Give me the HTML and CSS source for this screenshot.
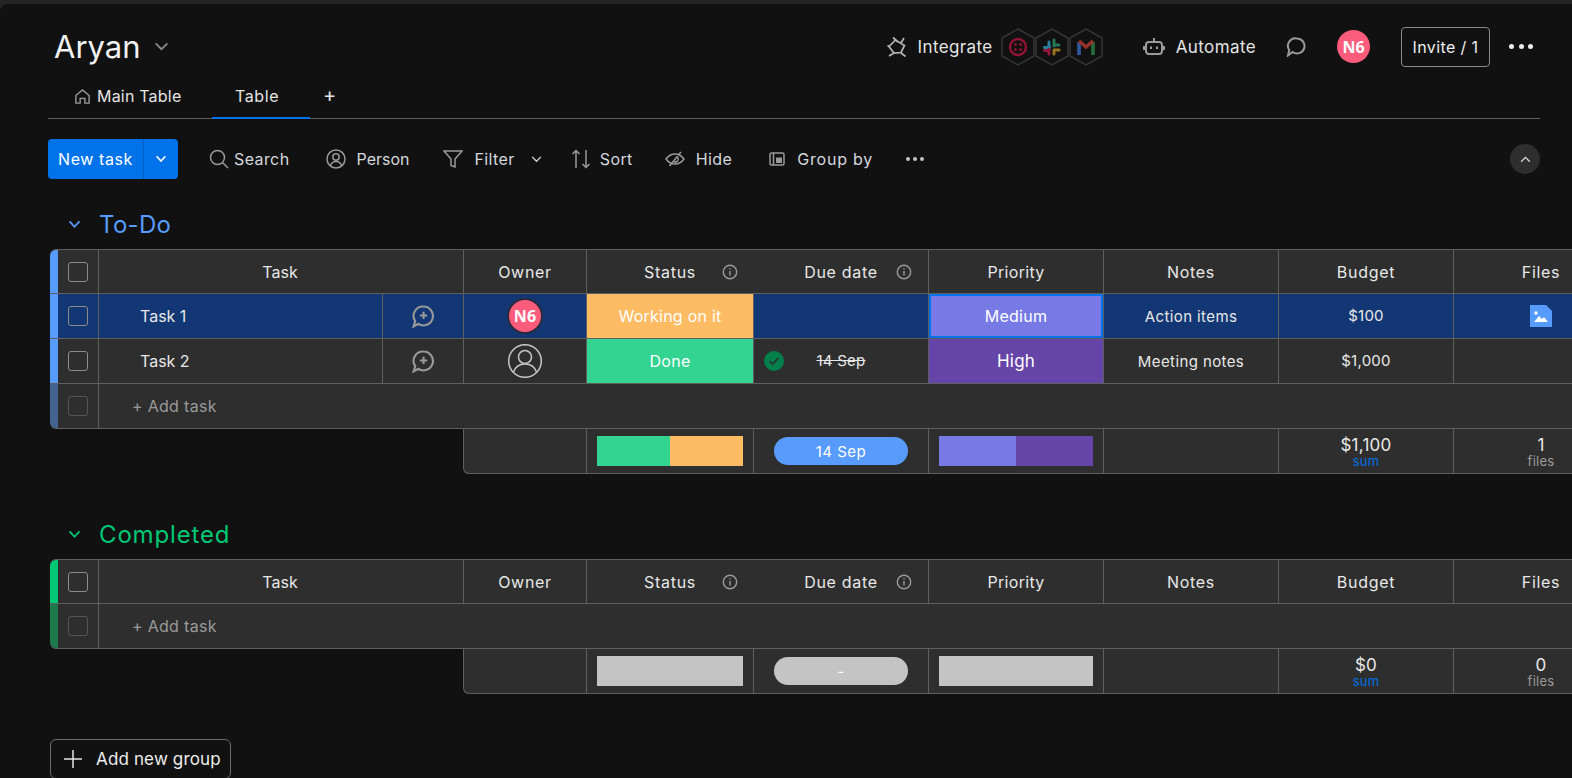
FILE: index.html

```html
<!DOCTYPE html>
<html lang="en">
<head>
  <meta charset="UTF-8" />
  <meta name="viewport" content="width=device-width, initial-scale=1.0" />
  <title>Aryan - Main Table</title>
  <link rel="stylesheet" href="styles.css">
</head>
<body>
  <main class="board">
    <header class="board-top">
      <h1 class="board-name">Aryan
        <svg class="ic-title" viewBox="0 0 16 10" width="15" height="9"><path d="M1.500 1.500 8 8l6.500-6.500" /></svg>
      </h1>
      <div class="top-actions">
        <svg class="ic ic-plug" viewBox="7 11 20 21" width="20" height="21"><path d="M9 21.500 15.500 15 24.500 20.500 21 27.500 14 28zM13 12.500l5 4.500M24 13l-3 5M20.500 27.500l5 4M14 28l-5 3M9 21.500l-1.500-1" /></svg>
        <span class="top-label top-integrate">Integrate</span>
        <svg class="hexes" viewBox="0 0 102 38" width="102" height="38">
          <g fill="none" stroke="#353535" stroke-width="1.500">
            <path d="M17 1 33 10V28L17 37 1 28V10Z" />
            <path d="M51 1 67 10V28L51 37 35 28V10Z" />
            <path d="M85 1 101 10V28L85 37 69 28V10Z" />
          </g>
          <g opacity=".62">
            <circle cx="17" cy="19" r="8" fill="none" stroke="#e0154c" stroke-width="2.400" />
            <circle cx="14.500" cy="16.500" r="1.500" fill="#e0154c" />
            <circle cx="19.500" cy="16.500" r="1.500" fill="#e0154c" />
            <circle cx="14.500" cy="21.500" r="1.500" fill="#e0154c" />
            <circle cx="19.500" cy="21.500" r="1.500" fill="#e0154c" />
            <path d="M48 14v5" stroke="#36c5f0" stroke-width="3" stroke-linecap="round" />
            <path d="M43.500 19.500h5" stroke="#36c5f0" stroke-width="3" stroke-linecap="round" />
            <path d="M53 12v6" stroke="#2eb67d" stroke-width="3" stroke-linecap="round" />
            <path d="M53.500 17h4.500" stroke="#2eb67d" stroke-width="3" stroke-linecap="round" />
            <path d="M53.500 22h4.500" stroke="#ecb22e" stroke-width="3" stroke-linecap="round" />
            <path d="M53 22v4" stroke="#ecb22e" stroke-width="3" stroke-linecap="round" />
            <path d="M48 21v5" stroke="#e01e5a" stroke-width="3" stroke-linecap="round" />
            <path d="M43.500 22.500h4" stroke="#e01e5a" stroke-width="3" stroke-linecap="round" />
            <path d="M78 14v13" stroke="#4285f4" stroke-width="3.600" />
            <path d="M92 14v13" stroke="#34a853" stroke-width="3.600" />
            <path d="M78 13l7 6 7-6" fill="none" stroke="#ea4335" stroke-width="3.600" />
          </g>
        </svg>
        <svg class="ic ic-bot" viewBox="0 0 22 20" width="22" height="20"><path d="M11 1v4M6 5h10a3 3 0 0 1 3 3v6a3 3 0 0 1-3 3H6a3 3 0 0 1-3-3V8a3 3 0 0 1 3-3zM1 9v4M21 9v4M8 9.500v2.500M14 9.500v2.500" /></svg>
        <span class="top-label top-automate">Automate</span>
        <svg class="ic ic-chat" viewBox="0 0 20 20" width="20" height="20"><path d="M11 1.500a7.500 7.500 0 1 1-4.500 13.500l-4.500 3.500 1.200-5.500A7.500 7.500 0 0 1 11 1.500z" /></svg>
        <span class="avatar avatar-top">N6</span>
        <button class="invite">Invite / 1</button>
        <span class="dots dots-top"><i></i><i></i><i></i></span>
      </div>
    </header>

    <nav class="tabs">
      <a class="tab tab-main">
        <svg class="ic" viewBox="0 0 18 18" width="17" height="17"><path d="M2 8 9 2l7 6v8h-4.500v-5h-5v5H2z" /></svg>
        Main Table
      </a>
      <a class="tab tab-active">Table</a>
      <a class="tab tab-add">+</a>
    </nav>

    <div class="toolbar">
      <div class="new-task">
        <span class="new-task-label">New task</span>
        <span class="new-task-caret"><svg viewBox="0 0 14 10" width="12" height="8"><path d="M1.500 1.500 7 7.500l5.500-6" /></svg></span>
      </div>
      <span class="tool tool-search">
        <svg class="ic" viewBox="0 0 20 20" width="20" height="20"><circle cx="8.500" cy="8.500" r="7" /><path d="M13.500 13.500 19 19" /></svg>
        Search
      </span>
      <span class="tool tool-person">
        <svg class="ic" viewBox="0 0 20 20" width="20" height="20"><circle cx="10" cy="10" r="9" /><circle cx="10" cy="8" r="3.200" /><path d="M4.500 16.500c1-3 3-4 5.500-4s4.500 1 5.500 4" /></svg>
        Person
      </span>
      <span class="tool tool-filter">
        <svg class="ic" viewBox="0 0 20 20" width="20" height="20"><path d="M1 2h18l-7 8v8l-4-1.500V10z" /></svg>
        Filter
        <svg class="caret" viewBox="0 0 12 8" width="11" height="7"><path d="M1 1l5 5 5-5" /></svg>
      </span>
      <span class="tool tool-sort">
        <svg class="ic" viewBox="0 0 20 20" width="20" height="20"><path d="M5 19V1.500M1.500 5 5 1.500 8.500 5M15 1v17.500M11.500 15l3.500 3.500 3.500-3.500" /></svg>
        Sort
      </span>
      <span class="tool tool-hide">
        <svg class="ic" viewBox="0 0 20 16" width="20" height="16"><path d="M1 8c2.500-3.500 5.500-5 9-5s6.500 1.500 9 5c-2.500 3.500-5.500 5-9 5s-6.500-1.500-9-5zM16 1 4.500 15M12.800 6.500a3 3 0 0 1-3.800 4.300" /></svg>
        Hide
      </span>
      <span class="tool tool-group">
        <svg class="ic" viewBox="0 0 16 14" width="16" height="14"><rect x="1" y="1" width="14" height="12" rx="1.500" /><path d="M4.500 1v12" /><rect class="ic-solid" x="7" y="5.500" width="6" height="5.500" /></svg>
        Group by
      </span>
      <span class="dots dots-tool"><i></i><i></i><i></i></span>
      <span class="collapse"><svg viewBox="0 0 12 8" width="11" height="7"><path d="M1 6.500 6 1.500l5 5" /></svg></span>
    </div>

    <section class="group group-blue">
      <h2 class="group-title">
        <svg viewBox="0 0 14 10" width="13" height="9"><path d="M1.500 1.500 7 7.500l5.500-6" /></svg>
        To-Do
      </h2>
      <div class="table">
        <div class="row row-head">
          <div class="cell cell-check"><span class="check"></span></div>
          <div class="cell cell-task-head">Task</div>
          <div class="cell">Owner</div>
          <div class="cell cell-info">Status<svg class="info" viewBox="0 0 16 16" width="16" height="16"><circle cx="8" cy="8" r="6.700" /><path d="M8 7v4.500M8 4.200v1.300" /></svg></div>
          <div class="cell cell-info cell-noline">Due date<svg class="info" viewBox="0 0 16 16" width="16" height="16"><circle cx="8" cy="8" r="6.700" /><path d="M8 7v4.500M8 4.200v1.300" /></svg></div>
          <div class="cell cell-prio">Priority</div>
          <div class="cell">Notes</div>
          <div class="cell">Budget</div>
          <div class="cell">Files</div>
        </div>
        <div class="row row-selected">
          <div class="cell cell-check"><span class="check"></span></div>
          <div class="cell cell-name">Task 1</div>
          <div class="cell cell-comment">
            <svg class="ic ic-comment" viewBox="0 0 22 22" width="23" height="23"><path d="M12 1.500a9 9 0 1 1-5 16.500l-4.500 2.500 1.500-5A9 9 0 0 1 12 1.500zM12 6.500v7M8.500 10h7" /></svg>
          </div>
          <div class="cell"><span class="avatar avatar-cell">N6</span></div>
          <div class="cell cell-fill fill-working">Working on it</div>
          <div class="cell"></div>
          <div class="cell cell-fill fill-medium">Medium</div>
          <div class="cell cell-sm">Action items</div>
          <div class="cell cell-num">$100</div>
          <div class="cell">
            <svg viewBox="0 0 22 22" width="22" height="22"><path fill="#579bfc" d="M0 0h16l6 6v16H0z" /><circle cx="6" cy="8" r="1.700" fill="#fff" /><path fill="#fff" d="M4 17l5-6 3 3 2-2 4 5z" /></svg>
          </div>
        </div>
        <div class="row">
          <div class="cell cell-check"><span class="check"></span></div>
          <div class="cell cell-name">Task 2</div>
          <div class="cell cell-comment">
            <svg class="ic ic-comment" viewBox="0 0 22 22" width="23" height="23"><path d="M12 1.500a9 9 0 1 1-5 16.500l-4.500 2.500 1.500-5A9 9 0 0 1 12 1.500zM12 6.500v7M8.500 10h7" /></svg>
          </div>
          <div class="cell">
            <svg class="ic ic-person" viewBox="0 0 34 34" width="34" height="34"><circle cx="17" cy="17" r="16.300" /><circle cx="17" cy="13" r="6.500" /><path d="M5.500 28c2-5.500 6-8 11.500-8s9.500 2.500 11.500 8" /></svg>
          </div>
          <div class="cell cell-fill fill-done">Done</div>
          <div class="cell cell-date">
            <svg class="done-mark" viewBox="0 0 20 20" width="20" height="20"><circle cx="10" cy="10" r="10" fill="#037f4c" /><path d="M5.500 10l3 3 6-6" fill="none" stroke="#2e2e2e" stroke-width="1.600" /></svg>
            <s>14 Sep</s>
          </div>
          <div class="cell cell-fill fill-high">High</div>
          <div class="cell cell-sm">Meeting notes</div>
          <div class="cell cell-num">$1,000</div>
          <div class="cell"></div>
        </div>
        <div class="row row-add">
          <div class="cell cell-check"><span class="check"></span></div>
          <div class="cell cell-add">+ Add task</div>
        </div>
        <div class="row row-sum">
          <div class="sum-blank"></div>
          <div class="cell sum-first"></div>
          <div class="cell"><div class="bar"><span class="bar-done"></span><span class="bar-working"></span></div></div>
          <div class="cell"><span class="pill">14 Sep</span></div>
          <div class="cell"><div class="bar bar-prio"><span class="bar-medium"></span><span class="bar-high"></span></div></div>
          <div class="cell"></div>
          <div class="cell cell-total"><span class="total">$1,100</span><span class="total-sub sub-blue">sum</span></div>
          <div class="cell cell-total"><span class="total">1</span><span class="total-sub">files</span></div>
        </div>
      </div>
    </section>

    <section class="group group-green">
      <h2 class="group-title">
        <svg viewBox="0 0 14 10" width="13" height="9"><path d="M1.500 1.500 7 7.500l5.500-6" /></svg>
        Completed
      </h2>
      <div class="table">
        <div class="row row-head">
          <div class="cell cell-check"><span class="check"></span></div>
          <div class="cell cell-task-head">Task</div>
          <div class="cell">Owner</div>
          <div class="cell cell-info">Status<svg class="info" viewBox="0 0 16 16" width="16" height="16"><circle cx="8" cy="8" r="6.700" /><path d="M8 7v4.500M8 4.200v1.300" /></svg></div>
          <div class="cell cell-info cell-noline">Due date<svg class="info" viewBox="0 0 16 16" width="16" height="16"><circle cx="8" cy="8" r="6.700" /><path d="M8 7v4.500M8 4.200v1.300" /></svg></div>
          <div class="cell cell-prio">Priority</div>
          <div class="cell">Notes</div>
          <div class="cell">Budget</div>
          <div class="cell">Files</div>
        </div>
        <div class="row row-add">
          <div class="cell cell-check"><span class="check"></span></div>
          <div class="cell cell-add">+ Add task</div>
        </div>
        <div class="row row-sum">
          <div class="sum-blank"></div>
          <div class="cell sum-first"></div>
          <div class="cell"><div class="bar bar-empty"></div></div>
          <div class="cell"><span class="pill pill-empty">-</span></div>
          <div class="cell"><div class="bar bar-prio bar-empty"></div></div>
          <div class="cell"></div>
          <div class="cell cell-total"><span class="total">$0</span><span class="total-sub sub-blue">sum</span></div>
          <div class="cell cell-total"><span class="total">0</span><span class="total-sub">files</span></div>
        </div>
      </div>
    </section>

    <button class="add-group">
      <svg viewBox="0 0 20 20" width="20" height="20"><path d="M10 1v18M1 10h18" /></svg>
      Add new group
    </button>
  </main>
</body>
</html>
```

FILE: styles.css

```css
html, body { margin: 0; height: 100%; overflow: hidden; }
body { background: #232323; padding-top: 4px; box-sizing: border-box; font-family: Inter, "Noto Sans", sans-serif; font-size: 16px; color: #eee; }
svg { display: block; }
.ic path, .ic circle, .ic rect, .info path, .info circle { fill: none; stroke: #9a9a9a; stroke-width: 1.5; }
.ic .ic-solid { fill: #9a9a9a; stroke: none; }
.ic-plug path, .ic-bot path, .ic-chat path, .ic-comment path { stroke-width: 2; }
.ic-plug path { stroke: #b5b5b5; stroke-width: 1.700; }
.ic-person circle, .ic-person path { stroke: #c5c5c5; }

.board { background: #111; height: 774px; border-top-left-radius: 8px; overflow: hidden; padding-left: 48px; box-sizing: border-box; }

.board-top { display: flex; align-items: center; padding-top: 22px; height: 41px; }
.board-name { margin: 0 0 0 6px; font-size: 31px; font-weight: 400; display: flex; align-items: center; gap: 13px; color: #f2f2f2; }
.ic-title path { fill: none; stroke: #8a8a8a; stroke-width: 2; }
.top-actions { margin-left: auto; display: flex; align-items: center; padding-right: 39px; }
.top-label { color: #e4e4e4; font-size: 17px; letter-spacing: .4px; }
.top-integrate { margin-left: 10px; }
.hexes { margin-left: 8px; }
.ic-bot { margin-left: 40px; }
.top-automate { margin-left: 11px; }
.ic-chat { margin-left: 30px; }
.avatar { display: flex; align-items: center; justify-content: center; border-radius: 50%; background: #fb5c7c; color: #fff; font-family: "Noto Sans", sans-serif; font-weight: 700; }
.avatar-top { width: 33px; height: 33px; margin-left: 31px; font-size: 16px; }
.invite { margin-left: 31px; width: 89px; height: 40px; padding: 0; background: none; border: 1px solid #8a8a8a; border-radius: 4px; color: #eee; font: inherit; letter-spacing: .4px; }
.dots { display: flex; gap: 3px; }
.dots i { width: 5px; height: 5px; border-radius: 50%; background: #eee; }
.dots-top { margin-left: 19px; gap: 4.500px; }

.tabs { display: flex; align-items: flex-end; height: 47px; margin-top: 4px; margin-right: 32px; border-bottom: 1px solid #5f5f5f; }
.tab { display: flex; align-items: center; gap: 5px; height: 44px; box-sizing: border-box; color: #e4e4e4; }
.tab-main { margin-left: 26px; width: 138px; gap: 6px; letter-spacing: .2px; }
.tab-active { width: 98px; justify-content: center; padding-right: 8px; letter-spacing: .6px; border-bottom: 2px solid #0073ea; margin-bottom: -1px; height: 45px; }
.tab-add { margin-left: 13px; font-size: 20px; padding-bottom: 2px; }

.toolbar { display: flex; align-items: center; height: 40px; margin-top: 20px; margin-right: 32px; color: #d5d8df; letter-spacing: .4px; }
.new-task { display: flex; height: 40px; width: 130px; background: #0073ea; border-radius: 4px; color: #fff; letter-spacing: .6px; }
.new-task-label { width: 95px; display: flex; align-items: center; justify-content: center; border-right: 1px solid #0060c4; }
.new-task-caret { flex: 1; display: flex; align-items: center; justify-content: center; }
.new-task-caret path { fill: none; stroke: #fff; stroke-width: 2; }
.tool { display: flex; align-items: center; gap: 11px; }
.tool-search { margin-left: 31px; gap: 5px; }
.tool-person { margin-left: 36px; gap: 11px; letter-spacing: 0; }
.tool-filter { margin-left: 34px; gap: 11px; }
.caret { margin-left: 5px; }
.caret path { fill: none; stroke: #d5d8df; stroke-width: 1.500; }
.tool-sort { margin-left: 29px; gap: 9px; }
.tool-hide { margin-left: 32px; gap: 11px; }
.tool-group { margin-left: 37px; gap: 12px; letter-spacing: .8px; }
.dots-tool { margin-left: 33px; gap: 3px; }
.dots-tool i { width: 4px; height: 4px; background: #c5c5c5; }
.collapse { margin-left: auto; width: 30px; height: 30px; border-radius: 50%; background: #2e2e2e; display: flex; align-items: center; justify-content: center; }
.collapse path { fill: none; stroke: #d5d8df; stroke-width: 1.500; }

.group { margin-left: 2px; }
.group-blue { margin-top: 26px; --group: #579bfc; --group-dim: #44638f; --title-space: .3px; }
.group-green { margin-top: 41px; --group: #00c875; --group-dim: #1e7a4d; --title-space: .85px; }
.group-title { margin: 0 0 4px; height: 40px; padding-bottom: 2px; box-sizing: border-box; display: flex; align-items: center; gap: 18px; padding-left: 18px; font-size: 24px; font-weight: 400; color: var(--group); letter-spacing: var(--title-space); }
.group-title path { fill: none; stroke: var(--group); stroke-width: 2; }

.table { width: 1578px; }
.row { display: grid; grid-template-columns: 48px 284px 81px 123px 167px 175px 175px 175px 175px 175px; height: 45px; box-sizing: border-box; background: #2e2e2e; border-bottom: 1px solid #5f5f5f; }
.row-head { border-top: 1px solid #5f5f5f; grid-template-columns: 48px 365px 123px 167px 175px 175px 175px 175px 175px; border-top-left-radius: 6px; }
.row-selected { background: #133774; }
.row-add { grid-template-columns: 48px 1fr; border-bottom-left-radius: 6px; }
.row-sum { grid-template-columns: 413px 123px 167px 175px 175px 175px 175px 175px; background: none; border-bottom: 0; }

.cell { display: flex; align-items: center; justify-content: center; border-left: 1px solid #5f5f5f; box-sizing: border-box; min-width: 0; position: relative; color: #e8e8e8; letter-spacing: .25px; }
.row-head .cell { letter-spacing: .7px; }
.row-head .cell-task-head { letter-spacing: 0; padding-right: 2px; }
.row-head .cell-prio { letter-spacing: .3px; }
.cell-check { border-left: 8px solid var(--group); }
.row-head .cell-check { border-top-left-radius: 6px; }
.row-add .cell-check { border-left-color: var(--group-dim); border-bottom-left-radius: 6px; }
.check { width: 20px; height: 20px; box-sizing: border-box; border: 1px solid #8b8b8b; border-radius: 3px; margin-right: 1px; }
.row-add .check { border-color: #555; }
.cell-noline { border-left-color: transparent; }
.info { position: absolute; right: 15px; top: 14px; }
.cell-noline .info { right: 16px; }
.info path, .info circle { stroke-width: 1.400; }
.cell-name { justify-content: flex-start; padding-left: 41px; letter-spacing: 0; }
.cell-comment { padding-right: 2px; }
.cell-add { justify-content: flex-start; padding-left: 33px; color: #9a9a9a; letter-spacing: .3px; }
.avatar-cell { width: 32px; height: 32px; border: 2px solid #2b2b3d; font-size: 16px; }
.cell-fill { color: #fff; border-bottom: 0; }
.fill-working { background: #fdbc64; }
.fill-done { background: #33d391; }
.fill-medium { background: #777ae5; box-shadow: inset 0 0 0 2px #0073ea; }
.fill-high { background: #6645a9; font-size: 17px; }
.cell-sm { font-size: 15px; letter-spacing: .4px; }
.cell-num { font-size: 15px; padding-bottom: 2px; }
.cell-date { font-size: 15px; }
.cell-date s { margin-bottom: 2px; }
.done-mark { position: absolute; left: 10px; top: 12px; }

.sum-blank { background: #111; }
.row-sum .cell { background: #2e2e2e; border-bottom: 1px solid #5f5f5f; }
.sum-first { border-bottom-left-radius: 6px; }
.bar { display: flex; width: 146px; height: 30px; }
.bar span { flex: 1; }
.bar-prio { width: 154px; }
.bar-done { background: #33d391; }
.bar-working { background: #fdbc64; }
.bar-medium { background: #777ae5; }
.bar-high { background: #6645a9; }
.bar-empty { background: #c4c4c4; }
.pill { width: 134px; height: 28px; border-radius: 14px; background: #579bfc; color: #fff; display: flex; align-items: center; justify-content: center; font-size: 15px; letter-spacing: .5px; }
.pill-empty { background: #c4c4c4; }
.cell-total { flex-direction: column; line-height: 1; padding-top: 3px; }
.total { font-size: 17px; }
.total-sub { font-size: 13px; margin-top: 1px; color: #9a9a9a; }
.sub-blue { color: #0073ea; }

.add-group { margin: 45px 0 0 2px; width: 181px; height: 40px; display: flex; align-items: center; gap: 13px; padding: 0 0 0 12px; background: none; border: 1px solid #6b6b6b; border-radius: 6px; color: #eee; font: inherit; font-size: 17px; letter-spacing: .15px; }
.add-group path { fill: none; stroke: #e4e4e4; stroke-width: 1.500; }
```
